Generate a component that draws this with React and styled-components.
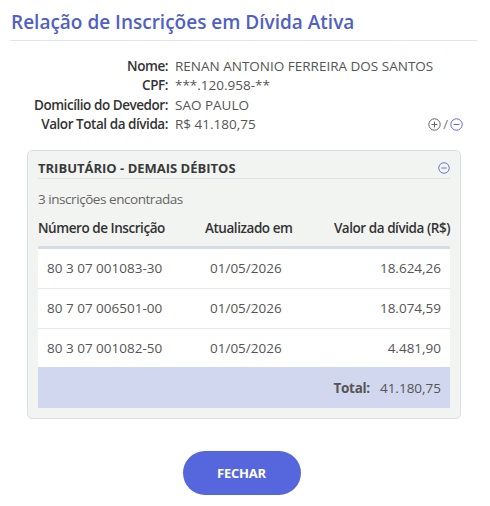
import React from "react";
import styled, { createGlobalStyle } from "styled-components";

const Global = createGlobalStyle`
  html, body { margin: 0; padding: 0; background: #fff; }
  body { font-family: "Open Sans", "Noto Sans", sans-serif; color: #555; }
  * { box-sizing: border-box; }
`;

const Page = styled.div`
  width: 490px;
  padding: 9px 13px 0 10px;
`;

const Title = styled.h1`
  margin: 0 0 0 1px;
  font-size: 19px;
  line-height: 26px;
  font-weight: 600;
  color: #5060c6;
  letter-spacing: 0;
`;

const Rule = styled.hr`
  margin: 5px 0 0;
  border: 0;
  border-top: 1px solid #e1e4ec;
`;

const Info = styled.div`
  display: grid;
  grid-template-columns: 158px 1fr auto;
  column-gap: 7px;
  margin-top: 16px;
  font-size: 13.5px;
  line-height: 19.4px;
`;

const Label = styled.div`
  text-align: right;
  font-weight: 600;
  color: #333;
  letter-spacing: -0.45px;
`;

const Value = styled.div`
  color: #555;
  grid-column: ${(p) => (p.$wide ? "2 / 4" : "2 / 3")};
`;

const Toggles = styled.div`
  display: flex;
  align-items: center;
  gap: 2px;
  padding-right: 14px;
  color: #777;
  font-size: 13px;
`;

const Panel = styled.section`
  margin: 15px 16px 0 17px;
  padding: 8px 10px 10px;
  background: #f2f4f1;
  border: 1px solid #dadfe6;
  border-radius: 5px;
`;

const PanelHead = styled.div`
  display: flex;
  align-items: center;
  justify-content: space-between;
  padding-bottom: 1px;
  border-bottom: 1px solid #dde1e8;
`;

const PanelTitle = styled.h2`
  margin: 0;
  font-size: 13px;
  line-height: 18px;
  font-weight: 700;
  color: #3a3a3a;
  letter-spacing: 0;
`;

const Count = styled.div`
  margin-top: 10px;
  font-size: 13.5px;
  line-height: 20px;
  color: #666;
  letter-spacing: -0.45px;
`;

const HeadRow = styled.div`
  display: grid;
  grid-template-columns: 167px 1fr auto;
  align-items: center;
  height: 39px;
  margin-top: 1px;
  border-bottom: 3px solid #d7dbe7;
  font-size: 13.5px;
  font-weight: 600;
  color: #333;
  letter-spacing: -0.45px;
`;

const Row = styled.div`
  display: grid;
  grid-template-columns: 163px 1fr auto;
  align-items: center;
  height: ${(p) => (p.$total ? "41px" : "39.5px")};
  padding: 0 9px;
  background: ${(p) => (p.$total ? "#d1d7ef" : "#fff")};
  border-top: ${(p) => (p.$first || p.$total ? "0" : "1px solid #e7eaee")};
  font-size: 13.5px;
  color: #555;
`;

const Right = styled.div`
  text-align: right;
  grid-column: ${(p) => p.$col || "auto"};
`;

const TotalLabel = styled.span`
  font-weight: 700;
  color: #555;
  margin-right: 10px;
  letter-spacing: -0.3px;
`;

const Footer = styled.div`
  display: flex;
  justify-content: center;
  padding: 32px 0 0 0;
`;

const Button = styled.button`
  width: 118px;
  height: 44px;
  margin-left: -4px;
  border: 0;
  border-radius: 22px;
  background: #5666dc;
  color: #fff;
  font-family: inherit;
  font-size: 13px;
  font-weight: 700;
  letter-spacing: -0.2px;
  cursor: pointer;
`;

const Circle = ({ plus, color, size = 13 }) => (
  <svg width={size} height={size} viewBox="0 0 13 13" fill="none" stroke={color} strokeWidth="1">
    <circle cx="6.5" cy="6.5" r="5.7" />
    <line x1="3.6" y1="6.5" x2="9.4" y2="6.5" />
    {plus && <line x1="6.5" y1="3.6" x2="6.5" y2="9.4" />}
  </svg>
);

const rows = [
  ["80 3 07 001083-30", "01/05/2026", "18.624,26"],
  ["80 7 07 006501-00", "01/05/2026", "18.074,59"],
  ["80 3 07 001082-50", "01/05/2026", "4.481,90"],
];

export default function App() {
  return (
    <Page>
      <Global />
      <Title>Relação de Inscrições em Dívida Ativa</Title>
      <Rule />
      <Info>
        <Label>Nome:</Label>
        <Value $wide>RENAN ANTONIO FERREIRA DOS SANTOS</Value>
        <Label>CPF:</Label>
        <Value $wide>***.120.958-**</Value>
        <Label>Domicílio do Devedor:</Label>
        <Value $wide>SAO PAULO</Value>
        <Label>Valor Total da dívida:</Label>
        <Value>R$ 41.180,75</Value>
        <Toggles>
          <Circle plus color="#666" />
          <span>/</span>
          <Circle color="#5b6bd2" />
        </Toggles>
      </Info>
      <Panel>
        <PanelHead>
          <PanelTitle>TRIBUTÁRIO - DEMAIS DÉBITOS</PanelTitle>
          <Circle color="#5b6bd2" size={12} />
        </PanelHead>
        <Count>3 inscrições encontradas</Count>
        <HeadRow>
          <div>Número de Inscrição</div>
          <div>Atualizado em</div>
          <Right>Valor da dívida (R$)</Right>
        </HeadRow>
        {rows.map((r, i) => (
          <Row key={r[0]} $first={i === 0}>
            <div>{r[0]}</div>
            <div>{r[1]}</div>
            <Right>{r[2]}</Right>
          </Row>
        ))}
        <Row $total>
          <Right $col="1 / 4">
            <TotalLabel>Total:</TotalLabel>41.180,75
          </Right>
        </Row>
      </Panel>
      <Footer>
        <Button>FECHAR</Button>
      </Footer>
    </Page>
  );
}
